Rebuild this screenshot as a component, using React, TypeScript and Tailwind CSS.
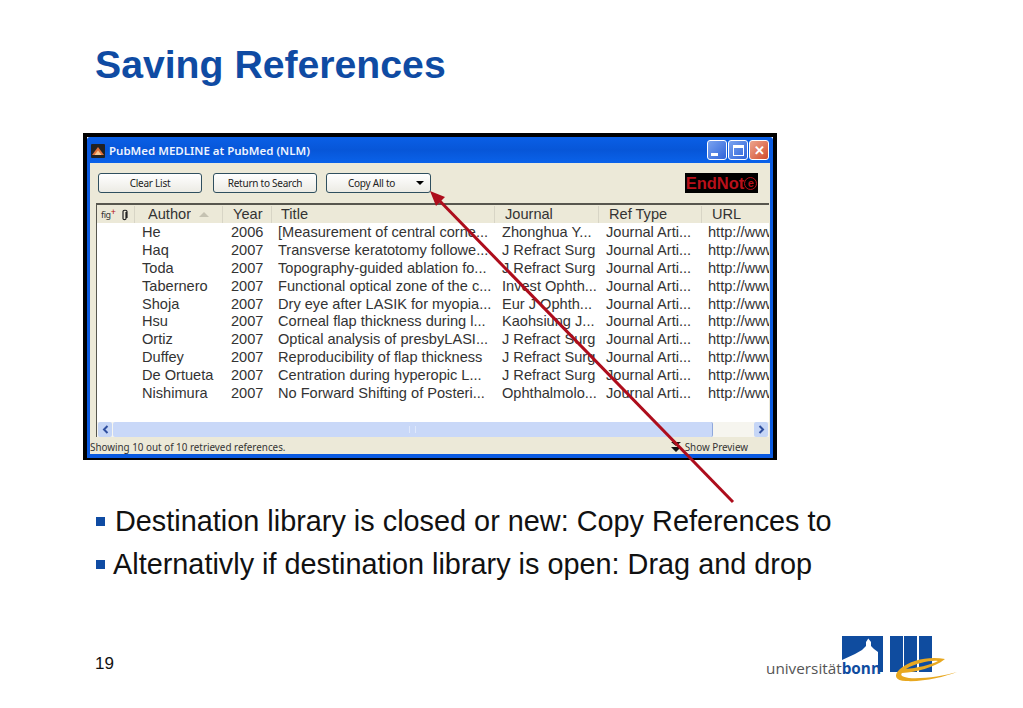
const rows = [
  ["He", "2006", "[Measurement of central corne...", "Zhonghua Y...", "Journal Arti...", "http://www"],
  ["Haq", "2007", "Transverse keratotomy followe...", "J Refract Surg", "Journal Arti...", "http://www"],
  ["Toda", "2007", "Topography-guided ablation fo...", "J Refract Surg", "Journal Arti...", "http://www"],
  ["Tabernero", "2007", "Functional optical zone of the c...", "Invest Ophth...", "Journal Arti...", "http://www"],
  ["Shoja", "2007", "Dry eye after LASIK for myopia...", "Eur J Ophth...", "Journal Arti...", "http://www"],
  ["Hsu", "2007", "Corneal flap thickness during l...", "Kaohsiung J...", "Journal Arti...", "http://www"],
  ["Ortiz", "2007", "Optical analysis of presbyLASI...", "J Refract Surg", "Journal Arti...", "http://www"],
  ["Duffey", "2007", "Reproducibility of flap thickness", "J Refract Surg", "Journal Arti...", "http://www"],
  ["De Ortueta", "2007", "Centration during hyperopic L...", "J Refract Surg", "Journal Arti...", "http://www"],
  ["Nishimura", "2007", "No Forward Shifting of Posteri...", "Ophthalmolo...", "Journal Arti...", "http://www"],
];

function HeaderCell({ label, className, children }: { label: string; className: string; children?: React.ReactNode }) {
  return (
    <div className={`flex h-full shrink-0 items-center border-r border-[#d8d5c6] ${className}`}>
      <span className="truncate">{label}</span>
      {children}
    </div>
  );
}

function ToolButton({ children, className }: { children: React.ReactNode; className: string }) {
  return (
    <div className={`flex h-[20px] items-center rounded-[3px] border border-[#2f4f5f] bg-gradient-to-b from-white to-[#ecebe4] font-['Noto_Sans',sans-serif] text-[10px] tracking-[-0.25px] text-[#222] ${className}`}>
      {children}
    </div>
  );
}

function Bullet({ text, gap }: { text: string; gap: string }) {
  return (
    <div className="flex h-[43px] items-center">
      <span className={`h-[9px] w-[9px] shrink-0 bg-[#0f4ba3] ${gap}`} />
      <span className="whitespace-nowrap text-[28.850px] text-[#111]">{text}</span>
    </div>
  );
}

function BonnLogo() {
  return (
    <div className="relative h-[50px] w-[192px]">
      <svg className="absolute inset-0" width="192" height="50" viewBox="0 0 192 50">
        <path fill="#0f4c9f" d="M76 0H117V36H112V16L108 13 105 10V6L102.300 2.500 100 6V10L96 14 89 18 76 24Z" />
        <path fill="#0f4c9f" d="M124 0H137V36H124ZM138 0H151V36H138ZM153 0H166V36H153Z" />
        <path
          fill="#e8a820"
          fillRule="evenodd"
          d="M179 23C165 20 145 23 134 33 127 39 129 45 140 45 157 46 178 41 191 36 177 40 158 43 143 42 136 41 134 39 136 37 150 36 168 32 179 23ZM140 33C150 27 165 24 172 25 165 29 150 32 140 33Z"
        />
      </svg>
      <div className="absolute left-0 top-[21px] whitespace-nowrap font-['Open_Sans',sans-serif] text-[15.300px] leading-[22px] text-[#555]">
        universität<span className="font-bold text-[#0f4c9f]">bonn</span>
      </div>
    </div>
  );
}

export default function App() {
  return (
    <div className="relative h-[708px] w-[1023px] overflow-hidden bg-white font-['Liberation_Sans',sans-serif]">
      <div className="pl-[95px] pt-[43px]">
        <h1 className="text-[39.200px] font-bold leading-[44px] text-[#0f4ba3]">Saving References</h1>
      </div>

      <div className="ml-[83px] mt-[46px] h-[327px] w-[694px] border-x-[4px] border-b-[2px] border-t-[4px] border-black">
        <div className="flex h-full flex-col rounded-t-[3px] bg-[#0a5ae0] px-[3px] pb-[4px]">
          {/* Title bar */}
          <div className="flex h-[26px] shrink-0 items-center bg-gradient-to-b from-[#0a5fe6] via-[#0756d8] to-[#0a62ea] px-[1px]">
            <svg width="14" height="14" viewBox="0 0 14 14" className="mt-[1px] shrink-0">
              <rect width="14" height="14" rx="1" fill="#222" />
              <path d="M1 11 7 3l6 8Z" fill="#e0703a" />
              <path d="M3.500 11 7 6.500l3.500 4.500Z" fill="#f5c890" />
            </svg>
            <span className="ml-[4px] mt-[2px] font-['Noto_Sans',sans-serif] text-[11.500px] font-semibold text-[#eef4ff]">PubMed MEDLINE at PubMed (NLM)</span>
            <div className="ml-auto flex gap-[1px]">
              <div className="flex h-[20px] w-[20px] items-end rounded-[3px] border border-white bg-gradient-to-br from-[#7ba3ef] to-[#2e62d8] px-[3px] pb-[3px]">
                <span className="h-[3px] w-[7px] bg-white" />
              </div>
              <div className="flex h-[20px] w-[20px] items-center justify-center rounded-[3px] border border-white bg-gradient-to-br from-[#7ba3ef] to-[#2e62d8]">
                <span className="h-[11px] w-[11px] border border-t-[3px] border-white" />
              </div>
              <div className="flex h-[20px] w-[20px] items-center justify-center rounded-[3px] border border-white bg-gradient-to-br from-[#eca48e] to-[#d04a28] text-[13px] font-bold leading-none text-white">
                ✕
              </div>
            </div>
          </div>

          {/* Toolbar */}
          <div className="flex h-[40px] shrink-0 items-center bg-[#ece9d8] pl-[8px] pr-[12px]">
            <ToolButton className="w-[104px] justify-center">Clear List</ToolButton>
            <ToolButton className="ml-[11px] w-[104px] justify-center">Return to Search</ToolButton>
            <ToolButton className="ml-[9px] w-[105px] pl-[21px]">
              <span>Copy All to</span>
              <span className="ml-[21px] h-0 w-0 border-x-[4px] border-t-[4px] border-x-transparent border-t-black" />
            </ToolButton>
            <div className="ml-auto flex h-[20px] w-[73px] items-center justify-center bg-black text-[16.500px] font-bold leading-none text-[#b8101a]">
              EndNot<span className="flex h-[13px] w-[13px] items-center justify-center rounded-full border border-[#b8101a] text-[11px]">e</span>
            </div>
          </div>

          {/* List */}
          <div className="flex min-h-0 flex-1 flex-col bg-[#ece9d8] pl-[6px] pr-[1px]">
            <div className="flex min-h-0 flex-1 flex-col overflow-hidden border-l border-t-[2px] border-[#57564e] bg-white">
              <div className="flex h-[18px] shrink-0 items-center bg-[#ece9d8] pt-[1px] text-[14.600px] text-[#333]">
                <div className="flex h-full w-[18px] shrink-0 items-center pl-[4px] font-['Noto_Sans',sans-serif] text-[9px] tracking-[-0.4px]">
                  fig<span className="-mt-[6px] text-[9px] text-[#b01010]">+</span>
                </div>
                <div className="flex h-full w-[20px] shrink-0 items-center justify-center border-r border-[#d8d5c6]">
                  <svg width="7" height="12" viewBox="0 0 7 12"><path d="M5 3V9.500C5 11 2 11 2 9.500V2.500C2 .8 6 .8 6 2.500V9" fill="none" stroke="#222" strokeWidth="1.200" /></svg>
                </div>
                <HeaderCell label="Author" className="w-[88px] pl-[13px]">
                  <span className="ml-[8px] h-0 w-0 border-x-[5px] border-b-[5px] border-x-transparent border-b-[#c5c2b2]" />
                </HeaderCell>
                <HeaderCell label="Year" className="w-[49px] pl-[10px]" />
                <HeaderCell label="Title" className="w-[223px] pl-[9px]" />
                <HeaderCell label="Journal" className="w-[104px] pl-[10px]" />
                <HeaderCell label="Ref Type" className="w-[103px] pl-[10px]" />
                <div className="pl-[10px]">URL</div>
              </div>
              <div className="flex-1">
                {rows.map((r) => (
                  <div key={r[0]} className="flex h-[17.900px] items-center whitespace-nowrap text-[14.600px] leading-[18px] text-[#333]">
                    <span className="ml-[45px] w-[89px] shrink-0">{r[0]}</span>
                    <span className="w-[47px] shrink-0">{r[1]}</span>
                    <span className="w-[224px] shrink-0">{r[2]}</span>
                    <span className="w-[104px] shrink-0">{r[3]}</span>
                    <span className="w-[102px] shrink-0">{r[4]}</span>
                    <span className="shrink-0">{r[5]}</span>
                  </div>
                ))}
              </div>
              {/* Horizontal scrollbar */}
              <div className="flex h-[15px] shrink-0 items-center bg-[#f6f5ef] px-[1px]">
                <div className="flex h-[15px] w-[14px] shrink-0 items-center justify-center rounded-[2px] bg-[#c6d6f6] text-[#2f4f9f]">
                  <svg width="7" height="9" viewBox="0 0 7 9"><path d="M5.500 1 2 4.500l3.500 3.500" fill="none" stroke="currentColor" strokeWidth="2" /></svg>
                </div>
                <div className="ml-[1px] flex h-[15px] w-[600px] shrink-0 items-center justify-center rounded-[2px] border-r border-[#8fa8dc] bg-[#c9d8f8]">
                  <span className="h-[7px] w-[7px] border-x border-[#dfe8fb]" />
                </div>
                <div className="ml-auto flex h-[15px] w-[14px] shrink-0 items-center justify-center rounded-[2px] bg-[#c6d6f6] text-[#2f4f9f]">
                  <svg width="7" height="9" viewBox="0 0 7 9"><path d="M1.500 1 5 4.500l-3.500 3.500" fill="none" stroke="currentColor" strokeWidth="2" /></svg>
                </div>
              </div>
            </div>
          </div>

          {/* Status bar */}
          <div className="flex h-[17px] shrink-0 items-center bg-[#ece9d8] pt-[3px] font-['Noto_Sans',sans-serif] text-[9.850px] text-[#333]">
            <span>Showing 10 out of 10 retrieved references.</span>
            <svg width="12" height="12" viewBox="0 0 12 12" className="ml-auto shrink-0">
              <path d="M1 1h10L6 5ZM1 6h10L6 11Z" fill="#111" />
            </svg>
            <span className="ml-[3px] mr-[22px]">Show Preview</span>
          </div>
        </div>
      </div>

      <div className="ml-[96px] mt-[40px]">
        <Bullet text="Destination library is closed or new: Copy References to" gap="mr-[10px]" />
        <Bullet text="Alternativly if destination library is open: Drag and drop" gap="mr-[8px]" />
      </div>

      <div className="ml-[95px] mr-[65px] mt-[50px] flex items-start justify-between">
        <span className="mt-[15px] text-[17px] text-[#111]">19</span>
        <BonnLogo />
      </div>

      {/* Red arrow laid over the window */}
      <svg className="pointer-events-none absolute inset-0" width="1023" height="708" viewBox="0 0 1023 708">
        <path d="M733 502 433 194" stroke="#ad0d1c" strokeWidth="3" fill="none" />
        <path d="M430 191 445 197 436 206Z" fill="#ad0d1c" />
      </svg>
    </div>
  );
}
